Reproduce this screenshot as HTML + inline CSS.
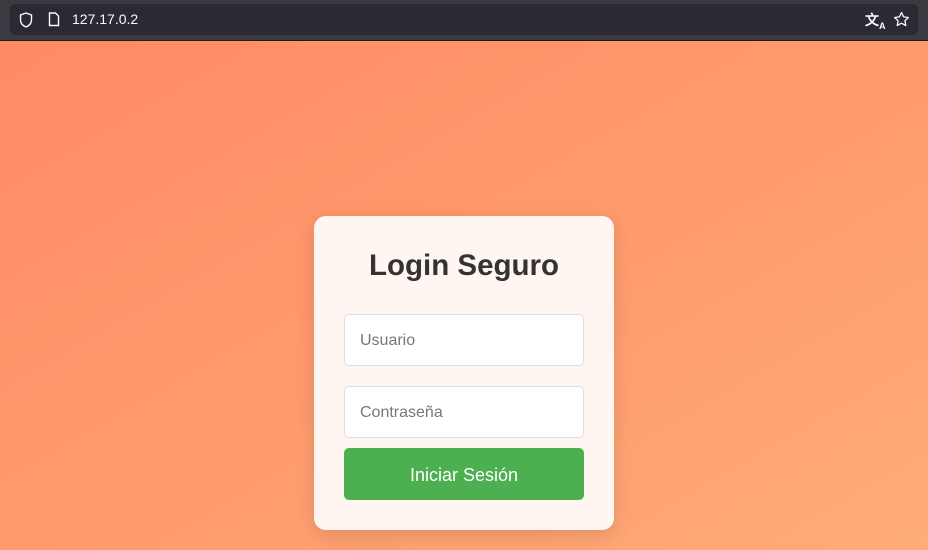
<!DOCTYPE html>
<html><head><meta charset="utf-8"><style>
*{box-sizing:border-box;margin:0;padding:0}
body{width:928px;height:550px;overflow:hidden;font-family:"Liberation Sans",sans-serif;background:#3a3b40;position:relative}
.bar{position:absolute;left:0;top:0;width:928px;height:41px;background:#3a3b40;border-bottom:1px solid #1c1b22}
.url{position:absolute;left:10px;top:4px;width:908px;height:31px;background:#2b2a33;border-radius:5px}
.url span{position:absolute;left:62px;top:7px;color:#fbfbfe;font-size:14px}
.page{position:absolute;left:0;top:41px;width:928px;height:509px;background:linear-gradient(150deg,#ff8a65 0%,#ff9a6c 50%,#ffac78 100%)}
.card{position:absolute;left:314px;top:175px;width:300px;height:314px;background:#fff5f1;border-radius:12px;box-shadow:0 6px 20px rgba(0,0,0,.12)}
h1{position:absolute;top:33px;width:100%;text-align:center;font-size:29.5px;font-weight:bold;color:#333}
.in{position:absolute;left:30px;width:240px;height:52px;background:#fff;border:1px solid #ddd;border-radius:5px;color:#777;font-size:16px;padding:17px 15px}
.btn{position:absolute;left:30px;top:232px;width:240px;height:52px;background:#4caf50;border-radius:5px;color:#fff;font-size:18px;text-align:center;line-height:54px}
</style></head><body>
<div class="bar"><div class="url">
<svg style="position:absolute;left:9px;top:8px" width="14" height="16" viewBox="0 0 14 16"><path d="M7 1L1.5 3v5c0 3.5 2.5 5.8 5.5 7 3-1.2 5.5-3.5 5.5-7V3z" fill="none" stroke="#fbfbfe" stroke-width="1.4"/></svg>
<svg style="position:absolute;left:38px;top:8px" width="12" height="15" viewBox="0 0 12 15"><path d="M1.5 1h6l3 3v9.5h-9z" fill="none" stroke="#fbfbfe" stroke-width="1.4"/></svg>
<span>127.17.0.2</span>
<div style="position:absolute;left:855px;top:6px;color:#fbfbfe;font-size:14px;font-weight:bold">文<sub style="font-size:9px">A</sub></div>
<svg style="position:absolute;left:883px;top:7px" width="17" height="17" viewBox="0 0 17 17"><path d="M8.5 1.5l2.1 4.4 4.8.6-3.5 3.3.9 4.8-4.3-2.4-4.3 2.4.9-4.8L1.6 6.5l4.8-.6z" fill="none" stroke="#fbfbfe" stroke-width="1.3" stroke-linejoin="round"/></svg>
</div></div>
<div class="page"><div class="card">
<h1>Login Seguro</h1>
<div class="in" style="top:98px">Usuario</div>
<div class="in" style="top:170px">Contraseña</div>
<div class="btn">Iniciar Sesión</div>
</div></div>
</body></html>
